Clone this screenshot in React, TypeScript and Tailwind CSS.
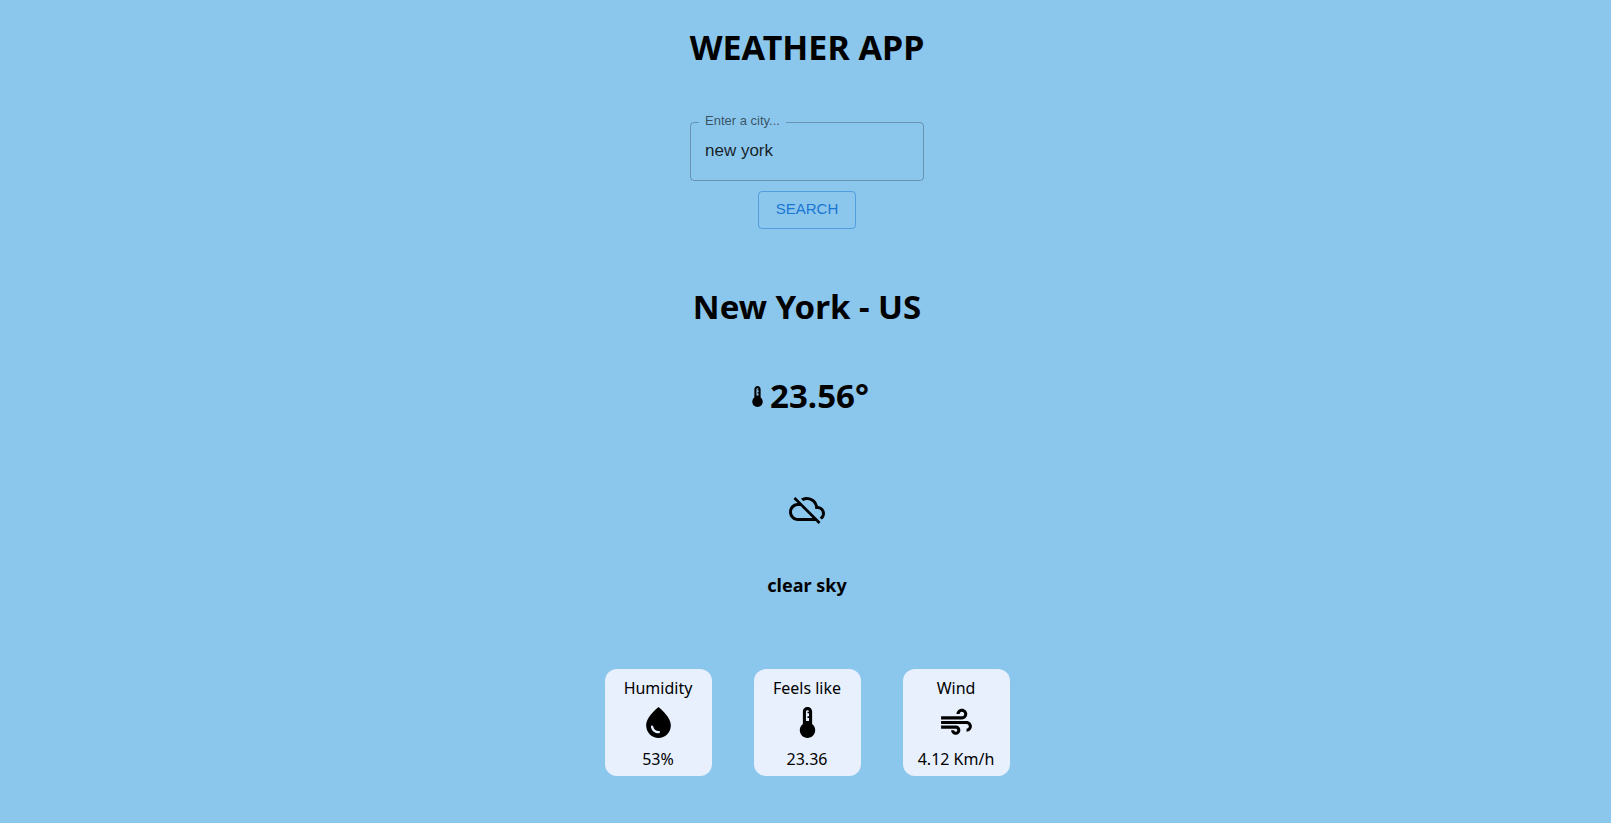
import { useState } from "react";
import type { ReactNode } from "react";
import { MdAir, MdCloudOff, MdDeviceThermostat, MdWaterDrop } from "react-icons/md";

type StatProps = { label: string; value: string; icon: ReactNode };

function Stat({ label, value, icon }: StatProps) {
  return (
    <li className="flex min-w-[107px] flex-col items-center rounded-xl bg-[#e8f0fe] pt-2 pb-[6px]">
      <span className="text-[16px] leading-[22px]">{label}</span>
      <span className="mt-[5px] mb-[7px]">{icon}</span>
      <span className="text-[16px] leading-[22px]">{value}</span>
    </li>
  );
}

export default function App() {
  const [city, setCity] = useState("new york");

  return (
    <main className="flex min-h-screen flex-col items-center bg-[#8bc6ec] pt-[23px] pb-12 pl-[3px] font-['Noto_Sans',sans-serif] text-black">
      <h1 className="text-[34px] leading-[48px] font-bold">WEATHER APP</h1>

      <form className="mt-[42px] flex flex-col items-center gap-[10px] font-['Liberation_Sans',sans-serif]" onSubmit={(e) => e.preventDefault()}>
        <fieldset className="h-[68px] w-[234px] rounded border border-black/25 px-2">
          <legend className="px-[6px] pb-[2px] text-[13px] leading-[16px] text-black/60">
            <label htmlFor="city">Enter a city...</label>
          </legend>
          <input
            id="city"
            type="text"
            value={city}
            onChange={(e) => setCity(e.target.value)}
            className="mt-2 block h-6 w-full bg-transparent px-[6px] text-[17px] leading-6 text-black/85 outline-none"
          />
        </fieldset>
        <button type="submit" className="h-[38px] w-[98px] rounded border border-[#1976d2]/50 pb-[1px] text-[15px] text-[#1976d2]">
          SEARCH
        </button>
      </form>

      <h2 className="mt-[54px] text-[33px] leading-[48px] font-bold">New York - US</h2>

      <p className="mt-[41px] flex items-center text-[33px] leading-[48px] font-bold">
        <MdDeviceThermostat size={25} aria-hidden="true" />
        23.56°
      </p>

      <MdCloudOff size={36} className="mt-[71px]" aria-hidden="true" />

      <h3 className="mt-[45px] text-[18px] leading-[26px] font-bold">clear sky</h3>

      <ul className="mt-[71px] flex gap-[42px]">
        <Stat label="Humidity" value="53%" icon={<MdWaterDrop size={37} aria-hidden="true" />} />
        <Stat label="Feels like" value="23.36" icon={<MdDeviceThermostat size={37} aria-hidden="true" />} />
        <Stat label="Wind" value="4.12 Km/h" icon={<MdAir size={37} aria-hidden="true" />} />
      </ul>
    </main>
  );
}
